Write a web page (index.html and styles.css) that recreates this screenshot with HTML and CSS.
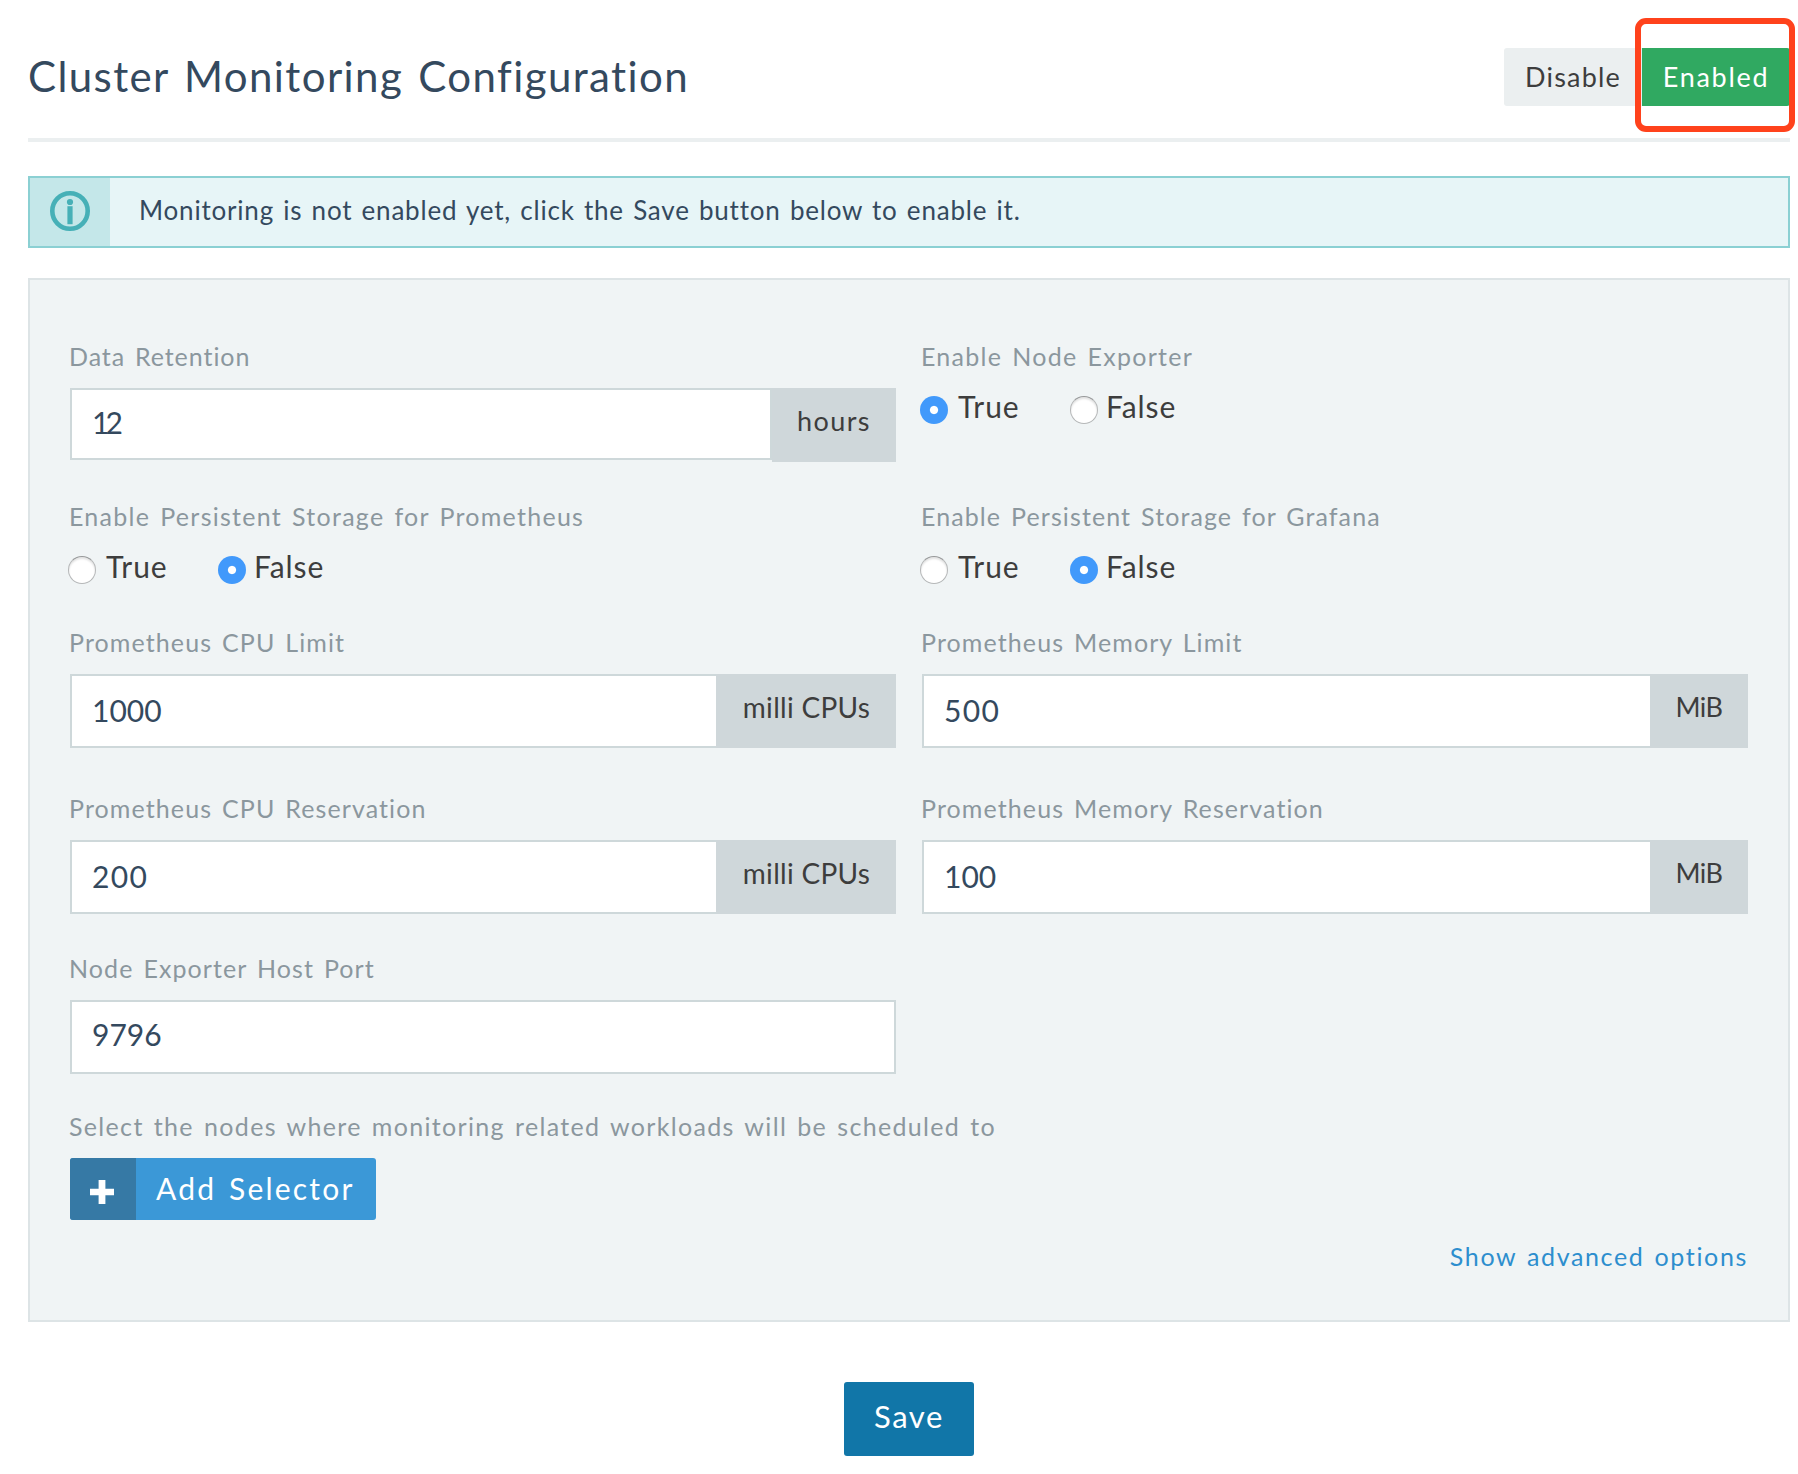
FILE: index.html
```
<!DOCTYPE html>
<html lang="en">
<head>
<meta charset="utf-8">
<title>Cluster Monitoring Configuration</title>
<link rel="stylesheet" href="styles.css">
</head>
<body>
<main class="page">
  <header class="header">
    <h1 class="title">Cluster Monitoring Configuration</h1>
    <div class="toggle">
      <button class="toggle-btn off">Disable</button>
      <button class="toggle-btn on">Enabled</button>
      <span class="highlight"></span>
    </div>
  </header>

  <section class="banner">
    <div class="banner-icon">
      <svg width="40" height="40" viewBox="0 0 40 40" fill="#46b0b7">
        <circle cx="20" cy="20" r="17.7" fill="none" stroke="#46b0b7" stroke-width="4.6"/>
        <circle cx="20" cy="11" r="3.1"/>
        <rect x="17.4" y="15.2" width="5.2" height="18"/>
      </svg>
    </div>
    <p class="banner-text">Monitoring is not enabled yet, click the Save button below to enable it.</p>
  </section>

  <section class="panel">
    <div class="grid">
      <div class="field">
        <div class="label tight">Data Retention</div>
        <div class="input-group short">
          <div class="input digits-narrow">12</div>
          <div class="addon hours">hours</div>
        </div>
      </div>
      <div class="field">
        <div class="label wide">Enable Node Exporter</div>
        <div class="radios">
          <label class="option"><span class="radio checked"></span><span class="option-text true">True</span></label>
          <label class="option"><span class="radio"></span><span class="option-text">False</span></label>
        </div>
      </div>

      <div class="field">
        <div class="label wide">Enable Persistent Storage for Prometheus</div>
        <div class="radios">
          <label class="option"><span class="radio"></span><span class="option-text true">True</span></label>
          <label class="option"><span class="radio checked"></span><span class="option-text">False</span></label>
        </div>
      </div>
      <div class="field">
        <div class="label">Enable Persistent Storage for Grafana</div>
        <div class="radios">
          <label class="option"><span class="radio"></span><span class="option-text true">True</span></label>
          <label class="option"><span class="radio checked"></span><span class="option-text">False</span></label>
        </div>
      </div>

      <div class="field">
        <div class="label">Prometheus CPU Limit</div>
        <div class="input-group">
          <div class="input">1000</div>
          <div class="addon cpu">milli CPUs</div>
        </div>
      </div>
      <div class="field">
        <div class="label">Prometheus Memory Limit</div>
        <div class="input-group">
          <div class="input digits-wide">500</div>
          <div class="addon mib">MiB</div>
        </div>
      </div>

      <div class="field">
        <div class="label">Prometheus CPU Reservation</div>
        <div class="input-group">
          <div class="input digits-wide">200</div>
          <div class="addon cpu">milli CPUs</div>
        </div>
      </div>
      <div class="field">
        <div class="label">Prometheus Memory Reservation</div>
        <div class="input-group">
          <div class="input">100</div>
          <div class="addon mib">MiB</div>
        </div>
      </div>

      <div class="field">
        <div class="label">Node Exporter Host Port</div>
        <div class="input-group">
          <div class="input lone">9796</div>
        </div>
      </div>
    </div>

    <div class="label wider">Select the nodes where monitoring related workloads will be scheduled to</div>
    <button class="add-btn">
      <span class="add-icon">
        <svg width="24" height="26" viewBox="0 0 24 26"><path d="M8.6 1h6.8v8.7H24v6.6h-8.6V25H8.6v-8.7H0V9.7h8.6z" fill="#fff"/></svg>
      </span>
      <span class="add-text">Add Selector</span>
    </button>
    <a class="advanced">Show advanced options</a>
  </section>

  <footer class="footer">
    <button class="save">Save</button>
  </footer>
</main>
</body>
</html>
```
FILE: styles.css
```
* { box-sizing: border-box; }
body {
  margin: 0;
  background: #fff;
  font-family: Lato, "Open Sans", sans-serif;
  color: #3d3d3d;
}
button {
  border: 0;
  margin: 0;
  padding: 0;
  font-family: inherit;
  color: inherit;
  white-space: nowrap;
}
.page { width: 1790px; padding-left: 28px; }

.header {
  display: flex;
  justify-content: space-between;
  align-items: flex-start;
  height: 142px;
  padding-top: 48px;
  border-bottom: 4px solid #ebeff0;
}
.title {
  margin: 0;
  font-size: 42px;
  font-weight: 400;
  line-height: 57px;
  letter-spacing: 1.4px;
  word-spacing: 3px;
  color: #34495e;
}
.toggle { display: flex; position: relative; }
.toggle-btn {
  height: 58px;
  font-size: 27px;
  line-height: 58px;
}
.off {
  width: 138px;
  background: #ebeff0;
  border-radius: 3px 0 0 3px;
  letter-spacing: 1.2px;
}
.on {
  width: 148px;
  background: #30a961;
  border-radius: 0 3px 3px 0;
  color: #fff;
  letter-spacing: 1.7px;
}
.highlight {
  position: absolute;
  left: 131px;
  top: -30px;
  width: 160px;
  height: 114px;
  border: 6px solid #ff421c;
  border-radius: 11px;
}

.banner {
  display: flex;
  height: 72px;
  margin-top: 34px;
  border: 2px solid #8bd0d3;
  background: #e7f5f7;
}
.banner-icon {
  display: flex;
  align-items: center;
  justify-content: center;
  width: 80px;
  background: #c4e7e9;
}
.banner-icon svg { margin-top: -2px; }
.banner-text {
  margin: 0;
  padding-left: 29px;
  font-size: 26px;
  line-height: 65px;
  letter-spacing: 0.8px;
  word-spacing: 1.8px;
  color: #34495e;
}

.panel {
  height: 1044px;
  margin-top: 30px;
  padding: 63px 40px 0;
  border: 2px solid #dde4e6;
  background: #f0f4f5;
}
.grid {
  display: grid;
  grid-template-columns: 826px 826px;
  grid-template-rows: 160px 126px 166px 160px 158px;
  column-gap: 26px;
}
.label {
  margin: 0 0 19px -1px;
  font-size: 25px;
  line-height: 26px;
  letter-spacing: 1.1px;
  word-spacing: 2.4px;
  white-space: nowrap;
  color: #8b979e;
}
.tight { letter-spacing: 0.95px; }
.wide { letter-spacing: 1.27px; }
.wider { letter-spacing: 1.33px; }

.input-group { display: flex; height: 74px; }
.input {
  flex: 1;
  padding-left: 20px;
  border: 2px solid #ced8da;
  border-right: 0;
  background: #fff;
  font-size: 30px;
  line-height: 69px;
  color: #34495e;
}
.short .input { height: 72px; line-height: 65px; border-right: 2px solid #ced8da; }
.lone { border-right: 2px solid #ced8da; line-height: 65px; }
.digits-narrow { letter-spacing: -4px; }
.digits-wide { letter-spacing: 1.3px; }
.addon {
  background: #cfd7da;
  font-size: 28px;
  line-height: 66px;
  text-align: center;
}
.hours { width: 124px; font-size: 27px; letter-spacing: 1.4px; }
.cpu { width: 180px; padding-left: 1px; letter-spacing: 0.3px; }
.mib { width: 98px; font-size: 27px; letter-spacing: -0.5px; }

.radios { display: flex; margin: 27px 0 0 -2px; }
.label:has(+ .radios) { margin-bottom: 0; }
.option { display: flex; align-items: flex-start; gap: 8px; width: 150px; }
.radio {
  width: 28px;
  height: 28px;
  border: 1px solid #b5b7b8;
  border-top-color: #969899;
  border-radius: 50%;
  background: #fff;
  box-shadow: inset 0 2px 2px #e3e3e3;
}
.radio.checked {
  border: 0;
  background: radial-gradient(circle at 50% 50%, #fff 3.6px, #4199fb 4.6px);
  box-shadow: none;
}
.option-text { font-size: 30px; line-height: 21px; letter-spacing: 0.9px; }
.true { padding-left: 2px; }

.add-btn {
  display: flex;
  width: 306px;
  height: 62px;
  border-radius: 3px;
  overflow: hidden;
  background: #3b98d7;
  color: #fff;
  text-align: left;
}
.add-icon {
  display: flex;
  align-items: center;
  justify-content: center;
  width: 66px;
  height: 62px;
  padding: 6px 2px 0 0;
  background: #3679a5;
}
.add-text {
  padding-left: 20px;
  font-size: 30px;
  line-height: 61px;
  letter-spacing: 2.2px;
  word-spacing: 3px;
}
.advanced {
  display: block;
  margin-top: 23px;
  font-size: 25px;
  line-height: 26px;
  letter-spacing: 1.65px;
  word-spacing: 2px;
  text-align: right;
  color: #2d8ece;
}
.footer { display: flex; justify-content: center; margin-top: 60px; }
.save {
  width: 130px;
  height: 74px;
  padding-bottom: 5px;
  border-radius: 3px;
  background: #1176a8;
  color: #fff;
  font-size: 31px;
  line-height: 69px;
  letter-spacing: 1.6px;
}
```
